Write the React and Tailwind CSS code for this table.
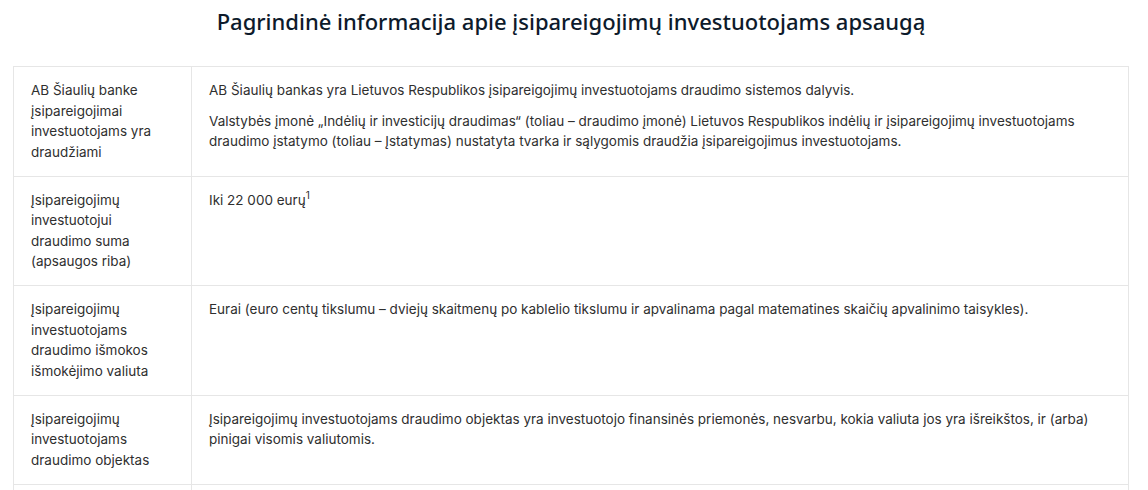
import React from "react";

const rows = [
  {
    label: "AB Šiaulių banke įsipareigojimai investuotojams yra draudžiami",
    content: [
      "AB Šiaulių bankas yra Lietuvos Respublikos įsipareigojimų investuotojams draudimo sistemos dalyvis.",
      "Valstybės įmonė „Indėlių ir investicijų draudimas“ (toliau – draudimo įmonė) Lietuvos Respublikos indėlių ir įsipareigojimų investuotojams draudimo įstatymo (toliau – Įstatymas) nustatyta tvarka ir sąlygomis draudžia įsipareigojimus investuotojams.",
    ],
  },
  {
    label: "Įsipareigojimų investuotojui draudimo suma (apsaugos riba)",
    content: [
      <>
        Iki 22 000 eurų<sup className="text-[10px] relative -top-[6px]">1</sup>
      </>,
    ],
  },
  {
    label: "Įsipareigojimų investuotojams draudimo išmokos išmokėjimo valiuta",
    content: [
      "Eurai (euro centų tikslumu – dviejų skaitmenų po kablelio tikslumu ir apvalinama pagal matematines skaičių apvalinimo taisykles).",
    ],
  },
  {
    label: "Įsipareigojimų investuotojams draudimo objektas",
    content: [
      "Įsipareigojimų investuotojams draudimo objektas yra investuotojo finansinės priemonės, nesvarbu, kokia valiuta jos yra išreikštos, ir (arba) pinigai visomis valiutomis.",
    ],
  },
];

export default function App() {
  return (
    <div className="bg-white w-[1148px] h-[490px] overflow-hidden">
      <div className="ml-[13px] w-[1116px]">
        <h1
          className="text-center text-[22px] leading-[30px] pt-[6px] font-medium text-[#0d1a2b]"
          style={{ fontFamily: '"Noto Sans", sans-serif' }}
        >
          Pagrindinė informacija apie įsipareigojimų investuotojams apsaugą
        </h1>
        <div
          className="mt-[30px] border border-[#e6e6e6] text-[13.5px] leading-[20.5px] text-[#2f2f2f]"
          style={{ fontFamily: 'Inter, "Liberation Sans", sans-serif' }}
        >
          {rows.map((r, i) => (
            <div
              key={i}
              className={`grid grid-cols-[178px_1fr] ${i > 0 ? "border-t border-[#e6e6e6]" : ""}`}
            >
              <div className="pl-[17px] pr-[20px] pt-[13px] pb-[13.5px] border-r border-[#e6e6e6]">
                {r.label}
              </div>
              <div className="pl-[17px] pr-[20px] pt-[13px] pb-[13.5px] flex flex-col gap-[10px]">
                {r.content.map((c, j) => (
                  <p key={j}>{c}</p>
                ))}
              </div>
            </div>
          ))}
          <div className="grid grid-cols-[178px_1fr] border-t border-[#e6e6e6] h-[60px]">
            <div className="border-r border-[#e6e6e6]" />
            <div />
          </div>
        </div>
      </div>
    </div>
  );
}
